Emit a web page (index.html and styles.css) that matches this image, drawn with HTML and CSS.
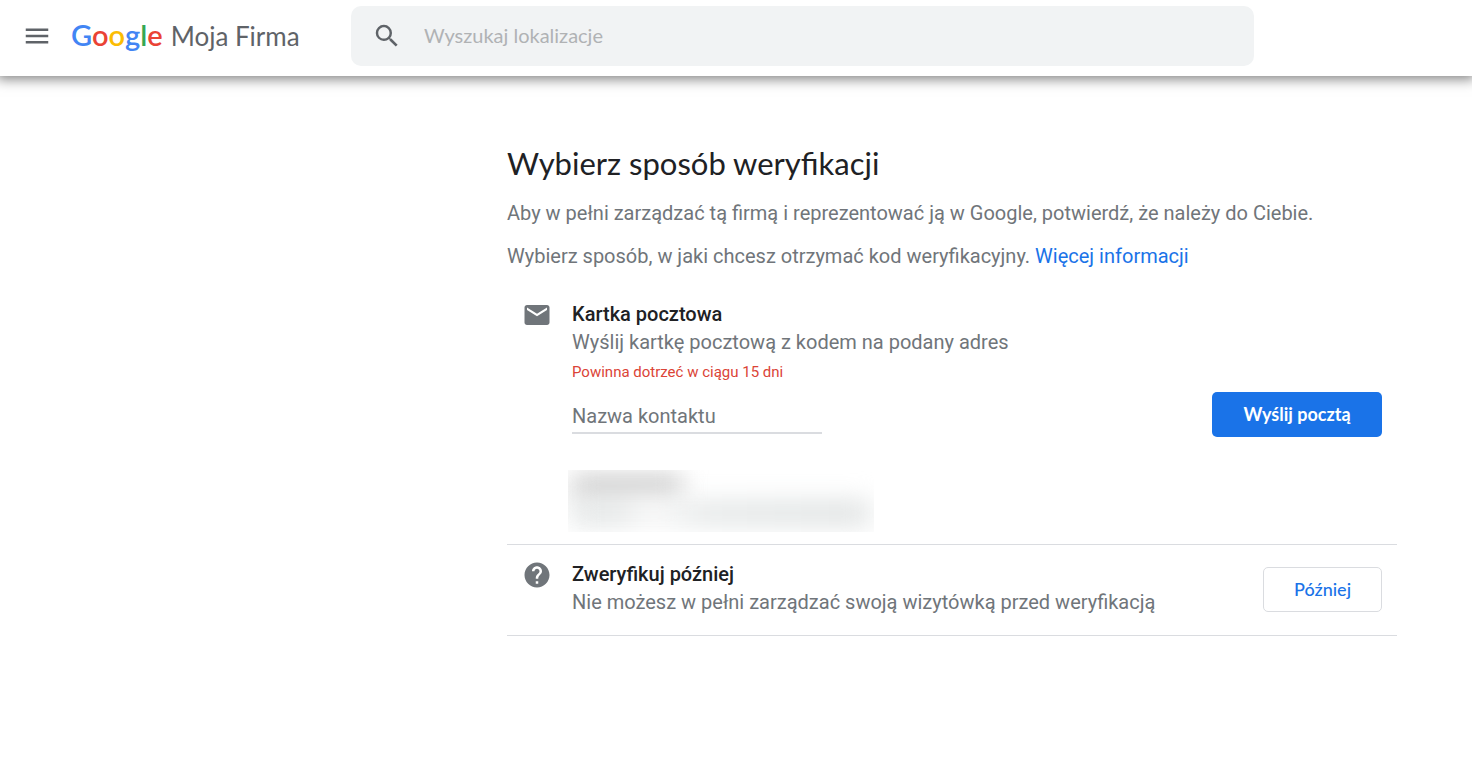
FILE: index.html
```html
<!DOCTYPE html>
<html lang="pl">
<head>
  <meta charset="UTF-8">
  <title>Google Moja Firma</title>
  <meta name="viewport" content="width=device-width, initial-scale=1.0">
  <link rel="stylesheet" href="styles.css">
</head>
<body>

<header class="topbar">
  <button class="menu-button" type="button" aria-label="Menu">
    <svg viewBox="0 0 24 24" width="30" height="30"><path d="M3 18h18v-2H3v2zm0-5h18v-2H3v2zm0-7v2h18V6H3z"/></svg>
  </button>
  <a class="brand" href="#">
    <span class="logo"><span class="blue">G</span><span class="red">o</span><span class="yellow">o</span><span class="blue">g</span><span class="green">l</span><span class="red">e</span></span>
    <span class="product">Moja Firma</span>
  </a>
  <form class="search" role="search">
    <svg viewBox="0 0 24 24" width="30" height="30" aria-hidden="true"><path d="M15.5 14h-.79l-.28-.27A6.471 6.471 0 0 0 16 9.5 6.5 6.5 0 1 0 9.5 16c1.61 0 3.09-.59 4.23-1.57l.27.28v.79l5 4.99L20.49 19l-4.99-5zm-6 0C7.01 14 5 11.99 5 9.5S7.01 5 9.5 5 14 7.01 14 9.5 11.99 14 9.5 14z"/></svg>
    <input type="search" placeholder="Wyszukaj lokalizacje" aria-label="Wyszukaj lokalizacje">
  </form>
</header>

<main class="content">
  <h1>Wybierz sposób weryfikacji</h1>
  <p>Aby w pełni zarządzać tą firmą i reprezentować ją w Google, potwierdź, że należy do Ciebie.</p>
  <p>Wybierz sposób, w jaki chcesz otrzymać kod weryfikacyjny. <a href="#">Więcej informacji</a></p>

  <section class="option option-postcard">
    <svg class="option-icon" viewBox="0 0 24 24" width="30" height="30" aria-hidden="true"><path d="M20 4H4c-1.1 0-1.99.9-1.99 2L2 18c0 1.1.9 2 2 2h16c1.1 0 2-.9 2-2V6c0-1.1-.9-2-2-2zm0 4l-8 5-8-5V6l8 5 8-5v2z"/></svg>
    <div class="option-body">
      <h2>Kartka pocztowa</h2>
      <div class="description">Wyślij kartkę pocztową z kodem na podany adres</div>
      <div class="notice">Powinna dotrzeć w ciągu 15 dni</div>
      <input class="contact" type="text" placeholder="Nazwa kontaktu" aria-label="Nazwa kontaktu">
      <div class="address"></div>
    </div>
    <button class="button primary" type="button">Wyślij pocztą</button>
  </section>

  <section class="option option-later">
    <svg class="option-icon" viewBox="0 0 24 24" width="30" height="30" aria-hidden="true"><path d="M12 2C6.48 2 2 6.48 2 12s4.48 10 10 10 10-4.48 10-10S17.52 2 12 2zm1 17h-2v-2h2v2zm2.07-7.75l-.9.92C13.45 12.9 13 13.5 13 15h-2v-.5c0-1.1.45-2.1 1.17-2.83l1.24-1.26c.37-.36.59-.86.59-1.41 0-1.1-.9-2-2-2s-2 .9-2 2H8c0-2.21 1.79-4 4-4s4 1.79 4 4c0 .88-.36 1.68-.93 2.25z"/></svg>
    <div class="option-body">
      <h2>Zweryfikuj później</h2>
      <div class="description">Nie możesz w pełni zarządzać swoją wizytówką przed weryfikacją</div>
    </div>
    <button class="button outlined" type="button">Później</button>
  </section>
</main>

</body>
</html>
```
FILE: styles.css
```css
:root {
  --blue: #1a73e8;
  --text: #202124;
  --muted: #70757a;
  --line: #dadce0;
  --display: "Google Sans", Lato, "Liberation Sans", sans-serif;
}

* {
  box-sizing: border-box;
}

body {
  margin: 0;
  background: #fff;
  color: var(--muted);
  font-family: Roboto, "Liberation Sans", sans-serif;
  font-size: 20px;
  line-height: 28px;
}

a {
  color: var(--blue);
  text-decoration: none;
}

button,
input {
  font: inherit;
}

svg {
  display: block;
  flex: none;
}

/* Header */
.topbar {
  display: flex;
  align-items: center;
  padding: 6px 218px 10px 22px;
  box-shadow: 0 0 12px 3px rgba(0, 0, 0, 0.5);
}

.menu-button {
  padding: 0;
  border: 0;
  background: none;
  fill: #5f6368;
  cursor: pointer;
}

.brand {
  display: flex;
  align-items: baseline;
  gap: 8px;
  width: 280px;
  margin-left: 19px;
  padding-bottom: 2px;
  font-family: var(--display);
  font-size: 26px;
  line-height: 34px;
  color: #5f6368;
  white-space: nowrap;
}

.logo {
  font-size: 29px;
  font-weight: 600;
}

.logo .blue { color: #4285f4; }
.logo .red { color: #ea4335; }
.logo .yellow { color: #fbbc04; }
.logo .green { color: #34a853; }

.search {
  display: flex;
  flex: 1;
  align-items: center;
  gap: 22px;
  height: 60px;
  padding: 0 21px;
  border-radius: 10px;
  background: #f1f3f4;
  fill: #5f6368;
}

.search input {
  flex: 1;
  min-width: 0;
  padding: 0 0 2px;
  border: 0;
  outline: 0;
  background: none;
  color: var(--text);
  font-family: var(--display);
}

.search input::placeholder {
  color: #b0b2b4;
  opacity: 1;
}

/* Verification */
.content {
  margin: 68px 75px 0 507px;
}

h1 {
  margin: 0 0 17px;
  color: var(--text);
  font-family: var(--display);
  font-size: 31px;
  font-weight: 400;
  line-height: 38px;
}

p {
  margin: 0 0 15px;
}

.option {
  display: flex;
  align-items: center;
  gap: 20px;
  padding: 15px;
  border-bottom: 1px solid var(--line);
}

.option-postcard {
  padding-bottom: 12px;
}

.option-later {
  padding-bottom: 19px;
}

.option-icon {
  align-self: flex-start;
  fill: var(--muted);
}

.option-body {
  flex: 1;
}

h2 {
  margin: 0;
  color: var(--text);
  font-size: 20px;
  font-weight: 500;
  line-height: 28px;
}

.notice {
  margin-top: 4px;
  color: #db4437;
  font-size: 15px;
  line-height: 24px;
}

.contact {
  display: block;
  width: 250px;
  height: 36px;
  margin-top: 14px;
  padding: 2px 0 0;
  border: 0;
  border-bottom: 2px solid var(--line);
  outline: 0;
  background: none;
  color: var(--text);
}

.contact::placeholder {
  color: var(--muted);
  opacity: 1;
}

/* Address blurred out for privacy */
.address {
  width: 306px;
  height: 62px;
  margin: 36px 0 0 -4px;
  padding: 4px;
  overflow: hidden;
}

.address::before,
.address::after {
  content: "";
  display: block;
  filter: blur(12px);
}

.address::before {
  width: 110px;
  height: 26px;
  background: #d0d0d0;
}

.address::after {
  height: 26px;
  background: linear-gradient(90deg, #e4e7e7 15%, #f8f8f8 26%, #e6e9e9 45%, #e0e3e3);
}

.button {
  height: 45px;
  padding: 0 28px;
  border: 1px solid transparent;
  border-radius: 5px;
  font-family: var(--display);
  font-size: 18px;
  white-space: nowrap;
  cursor: pointer;
}

.primary {
  min-width: 170px;
  margin-bottom: 4px;
  background: var(--blue);
  color: #fff;
  font-weight: 700;
}

.outlined {
  min-width: 119px;
  margin-top: 2px;
  border-color: var(--line);
  background: #fff;
  color: var(--blue);
  font-weight: 500;
}
```
